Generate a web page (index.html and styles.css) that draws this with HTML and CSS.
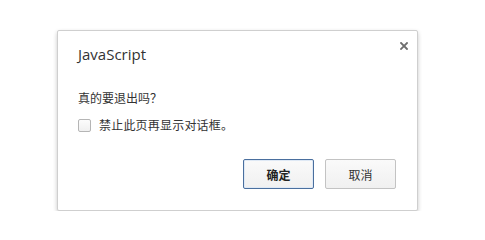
FILE: index.html
```html
<!DOCTYPE html>
<html lang="zh-CN">
<head>
<meta charset="utf-8">
<title>JavaScript</title>
<link rel="stylesheet" href="styles.css">
</head>
<body>
<div class="dialog">
  <div class="head">
    <span class="title">JavaScript</span>
    <span class="close" aria-label="关闭">
      <svg width="8" height="8" viewBox="0 0 8 8"><path d="M1 1L7 7M7 1L1 7" stroke="#6e6e6e" stroke-width="1.8" stroke-linecap="square"/></svg>
    </span>
  </div>
  <div class="msg">真的要退出吗？</div>
  <label class="check"><span class="box"></span><span>禁止此页再显示对话框。</span></label>
  <div class="actions">
    <button class="btn primary">确定</button>
    <button class="btn">取消</button>
  </div>
</div>
</body>
</html>
```
FILE: styles.css
```css
html, body {
  margin: 0;
  background: #ffffff;
}
body {
  padding: 30px 0 0 57px;
  font-family: "Open Sans", "Noto Sans CJK SC", sans-serif;
  color: #333333;
}
.dialog {
  box-sizing: border-box;
  width: 361px;
  height: 181px;
  border: 1px solid #cfcfcf;
  border-radius: 2px;
  background: #ffffff;
  box-shadow: 0 2px 4px rgba(0,0,0,0.22);
  padding: 0 21px 0 20px;
  display: flex;
  flex-direction: column;
}
.head {
  display: flex;
  justify-content: space-between;
  align-items: flex-start;
  height: 50px;
}
.title {
  font-size: 15px;
  line-height: 20px;
  margin-top: 13px;
  color: #333;
}
.close {
  margin-top: 11px;
  margin-right: -12px;
  display: flex;
}
.msg {
  font-family: "Noto Sans CJK SC", sans-serif;
  font-size: 12px;
  line-height: 16px;
  margin-top: 9px;
}
.check {
  display: flex;
  align-items: center;
  gap: 8px;
  margin-top: 11px;
  font-family: "Noto Sans CJK SC", sans-serif;
  font-size: 12px;
  line-height: 16px;
  letter-spacing: 0.2px;
}
.box {
  width: 11px;
  height: 11px;
  border: 1px solid #b5b5b5;
  border-radius: 2px;
  background: linear-gradient(#fcfcfc, #f0f0f0);
}
.actions {
  display: flex;
  justify-content: flex-end;
  gap: 11px;
  margin-top: 26px;
}
.btn {
  box-sizing: border-box;
  width: 71px;
  height: 30px;
  border: 1px solid #c3c3c3;
  border-radius: 2px;
  background: linear-gradient(#fafafa, #f0f0f0);
  font-family: "Noto Sans CJK SC", sans-serif;
  font-size: 12px;
  color: #333;
  padding: 0;
}
.btn.primary {
  border-color: #4a6f9e;
  box-shadow: inset 0 0 0 1px #dfe9f5;
  font-weight: bold;
  color: #222;
}
```
